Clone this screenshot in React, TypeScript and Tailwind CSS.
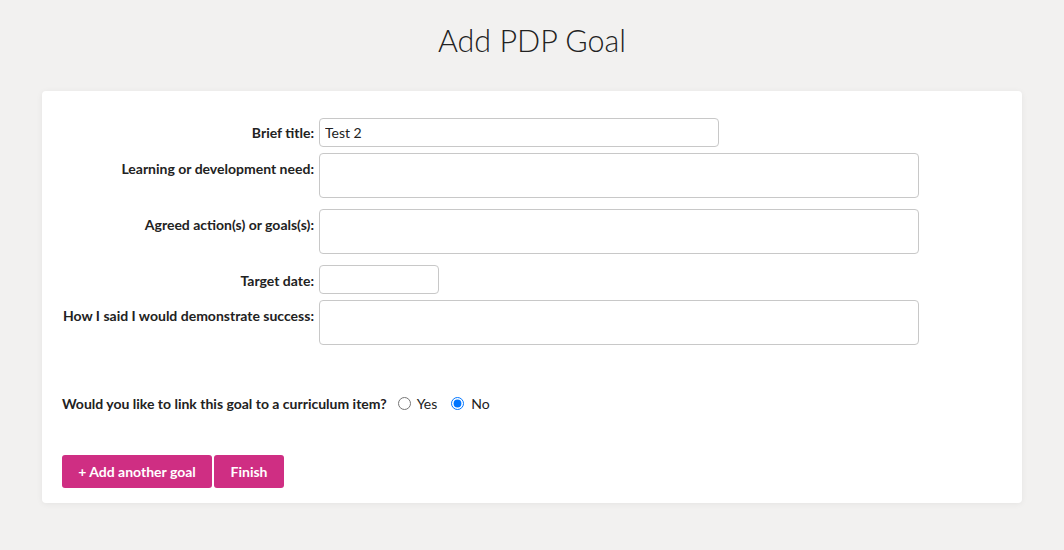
import { useState } from "react";

const Row = ({
  label,
  children,
  top = "pt-[7px]",
  className = "",
}: {
  label: string;
  children: React.ReactNode;
  top?: string;
  className?: string;
}) => (
  <div className={`grid grid-cols-[252px_1fr] gap-x-[5px] ${className}`}>
    <label className={`text-right font-bold text-[14px] leading-[17px] ${top}`}>{label}</label>
    <div>{children}</div>
  </div>
);

const App = () => {
  const [title, setTitle] = useState("Test 2");
  const [link, setLink] = useState("no");

  const box =
    "block border border-[#c8c8c8] rounded-[4px] bg-white text-[14px] px-[5px] outline-none";

  return (
    <div className="min-h-[550px] bg-[#f2f1f0] text-[#222] font-['Lato','Open_Sans',sans-serif] pb-[47px]">
      <h1 className="pt-[21px] text-center text-[30.5px] leading-[38px] font-light text-[#222]">
        Add PDP Goal
      </h1>

      <div className="mx-[42px] mt-[32px] bg-white rounded-[4px] shadow-[0_1px_6px_rgba(0,0,0,0.06)] px-[20px] pt-[27px] pb-[15px]">
        <Row label="Brief title:" top="pt-[6px]">
          <input
            className={`${box} w-[400px] h-[29px]`}
            value={title}
            onChange={(e) => setTitle(e.target.value)}
          />
        </Row>
        <Row label="Learning or development need:" className="mt-[6px]">
          <textarea className={`${box} w-[600px] h-[45px] resize-none`} />
        </Row>
        <Row label="Agreed action(s) or goals(s):" className="mt-[11px]">
          <textarea className={`${box} w-[600px] h-[45px] resize-none`} />
        </Row>
        <Row label="Target date:" className="mt-[11px]">
          <input className={`${box} w-[120px] h-[29px]`} />
        </Row>
        <Row label="How I said I would demonstrate success:" className="mt-[6px]">
          <textarea className={`${box} w-[600px] h-[45px] resize-none`} />
        </Row>

        <div className="mt-[50px] flex items-center text-[14px] leading-[17px]">
          <span className="font-bold">Would you like to link this goal to a curriculum item?</span>
          <label className="flex items-center ml-[11px]">
            <input
              type="radio"
              name="link"
              className="m-0 w-[13px] h-[13px]"
              checked={link === "yes"}
              onChange={() => setLink("yes")}
            />
            <span className="ml-[6px]">Yes</span>
          </label>
          <label className="flex items-center ml-[14px]">
            <input
              type="radio"
              name="link"
              className="m-0 w-[13px] h-[13px]"
              checked={link === "no"}
              onChange={() => setLink("no")}
            />
            <span className="ml-[7px]">No</span>
          </label>
        </div>

        <div className="mt-[43px] flex gap-[2px]">
          <button className="h-[33px] w-[150px] rounded-[3px] bg-[#cf2e83] text-white font-bold text-[14px]">
            + Add another goal
          </button>
          <button className="h-[33px] w-[70px] rounded-[3px] bg-[#cf2e83] text-white font-bold text-[14px]">
            Finish
          </button>
        </div>
      </div>
    </div>
  );
};

export default App;
